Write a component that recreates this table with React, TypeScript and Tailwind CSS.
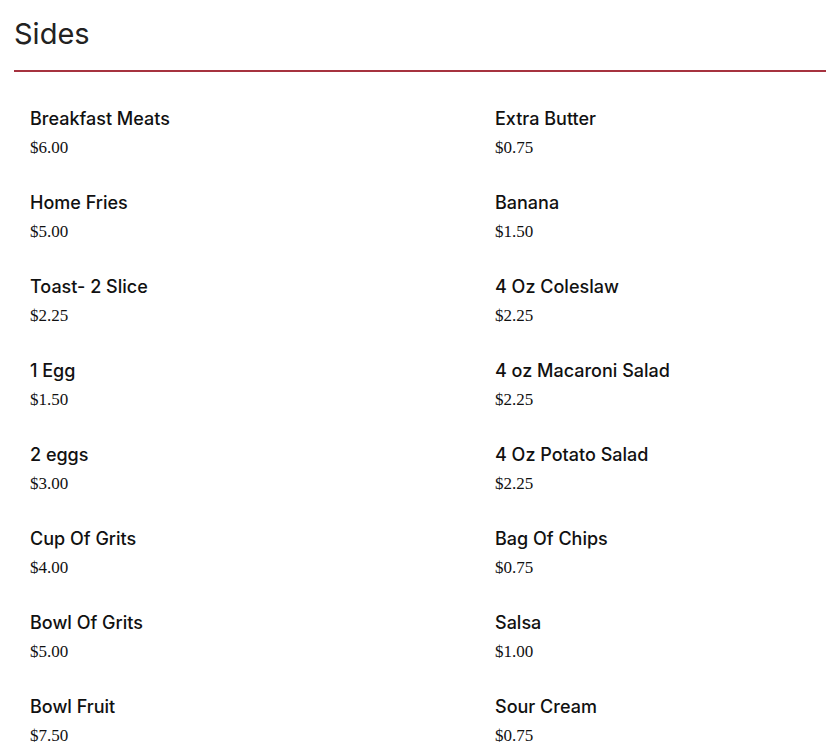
const items: [string, string][] = [
  ["Breakfast Meats", "$6.00"],
  ["Extra Butter", "$0.75"],
  ["Home Fries", "$5.00"],
  ["Banana", "$1.50"],
  ["Toast- 2 Slice", "$2.25"],
  ["4 Oz Coleslaw", "$2.25"],
  ["1 Egg", "$1.50"],
  ["4 oz Macaroni Salad", "$2.25"],
  ["2 eggs", "$3.00"],
  ["4 Oz Potato Salad", "$2.25"],
  ["Cup Of Grits", "$4.00"],
  ["Bag Of Chips", "$0.75"],
  ["Bowl Of Grits", "$5.00"],
  ["Salsa", "$1.00"],
  ["Bowl Fruit", "$7.50"],
  ["Sour Cream", "$0.75"],
];

export default function App() {
  return (
    <div className="min-h-screen bg-white pl-[14px]">
      <h2
        className="pt-[17px] text-[29px] leading-[34px] text-[#222]"
        style={{ fontFamily: "Inter, 'Noto Sans', sans-serif" }}
      >
        Sides
      </h2>
      <div className="mt-[19px] h-[2px] bg-[#a6323f]" />

      {/* menu items */}
      <div className="grid grid-cols-[465px_1fr] pl-4 pt-[35px]">
        {items.map(([name, price]) => (
          <div key={name} className="h-[84px]">
            <p
              className="text-[18px] font-medium leading-[24px] text-[#111]"
              style={{ fontFamily: "Inter, 'Noto Sans', sans-serif" }}
            >
              {name}
            </p>
            <p
              className="mt-[5px] text-[17px] leading-[24px] text-[#111]"
              style={{ fontFamily: "'Liberation Serif', serif" }}
            >
              {price}
            </p>
          </div>
        ))}
      </div>
    </div>
  );
}
